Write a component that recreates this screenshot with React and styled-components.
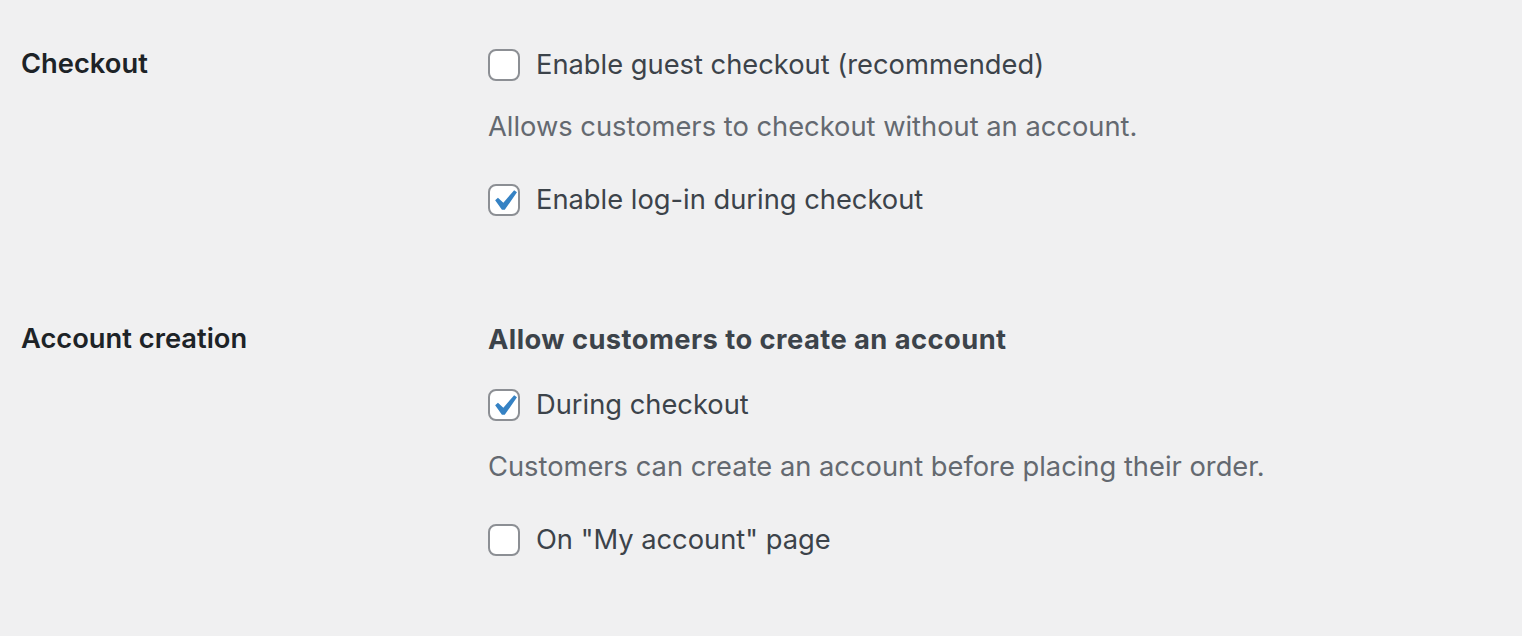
import React from "react";
import styled, { createGlobalStyle } from "styled-components";

const GlobalStyle = createGlobalStyle`
  html, body {
    margin: 0;
    padding: 0;
    background: #f0f0f1;
  }
  body {
    font-family: Inter, "Liberation Sans", Arial, sans-serif;
    font-size: 27.3px;
    color: #3c434a;
  }
`;

const Page = styled.div`
  padding: 49px 0 0 21px;
  width: 1522px;
  height: 636px;
  box-sizing: border-box;
`;

const Section = styled.section`
  display: grid;
  grid-template-columns: 467px 1fr;
  margin-bottom: ${(p) => p.$gap || 0}px;
`;

const Label = styled.h2`
  margin: 0;
  font-size: 27.3px;
  line-height: 30px;
  font-weight: 600;
  color: #1d2327;
`;

const Field = styled.div`
  display: flex;
  flex-direction: column;
`;

const Heading = styled.div`
  font-weight: 700;
  line-height: 32px;
  letter-spacing: 0.45px;
  color: #3c434a;
  margin-bottom: 33px;
`;

const Row = styled.label`
  display: flex;
  align-items: center;
  gap: 16px;
  height: 32px;
  line-height: 32px;
  color: #3c434a;
`;

const Box = styled.span`
  position: relative;
  width: 32px;
  height: 32px;
  box-sizing: border-box;
  border: 2px solid #8c8f94;
  border-radius: 8px;
  background: #fff;
  flex: none;
`;

const Tick = styled.svg`
  position: absolute;
  left: -7px;
  top: -6px;
  width: 42px;
  height: 42px;
`;

const Description = styled.p`
  margin: 30px 0 41px;
  line-height: 32px;
  color: #646970;
`;

const Checkbox = ({ checked, children }) => (
  <Row>
    <Box>
      {checked && (
        <Tick viewBox="0 0 20 20">
          <path
            d="M14.83 4.89l1.34.94-5.81 8.38H9.02L5.78 9.67l1.34-1.25 2.57 2.4z"
            fill="#3582c4"
          />
        </Tick>
      )}
    </Box>
    {children}
  </Row>
);

export default function App() {
  return (
    <>
      <GlobalStyle />
      <Page>
        <Section $gap={108}>
          <Label>Checkout</Label>
          <Field>
            <Checkbox>Enable guest checkout (recommended)</Checkbox>
            <Description>Allows customers to checkout without an account.</Description>
            <Checkbox checked>Enable log-in during checkout</Checkbox>
          </Field>
        </Section>
        <Section>
          <Label>Account creation</Label>
          <Field>
            <Heading>Allow customers to create an account</Heading>
            <Checkbox checked>During checkout</Checkbox>
            <Description>Customers can create an account before placing their order.</Description>
            <Checkbox>On "My account" page</Checkbox>
          </Field>
        </Section>
      </Page>
    </>
  );
}
